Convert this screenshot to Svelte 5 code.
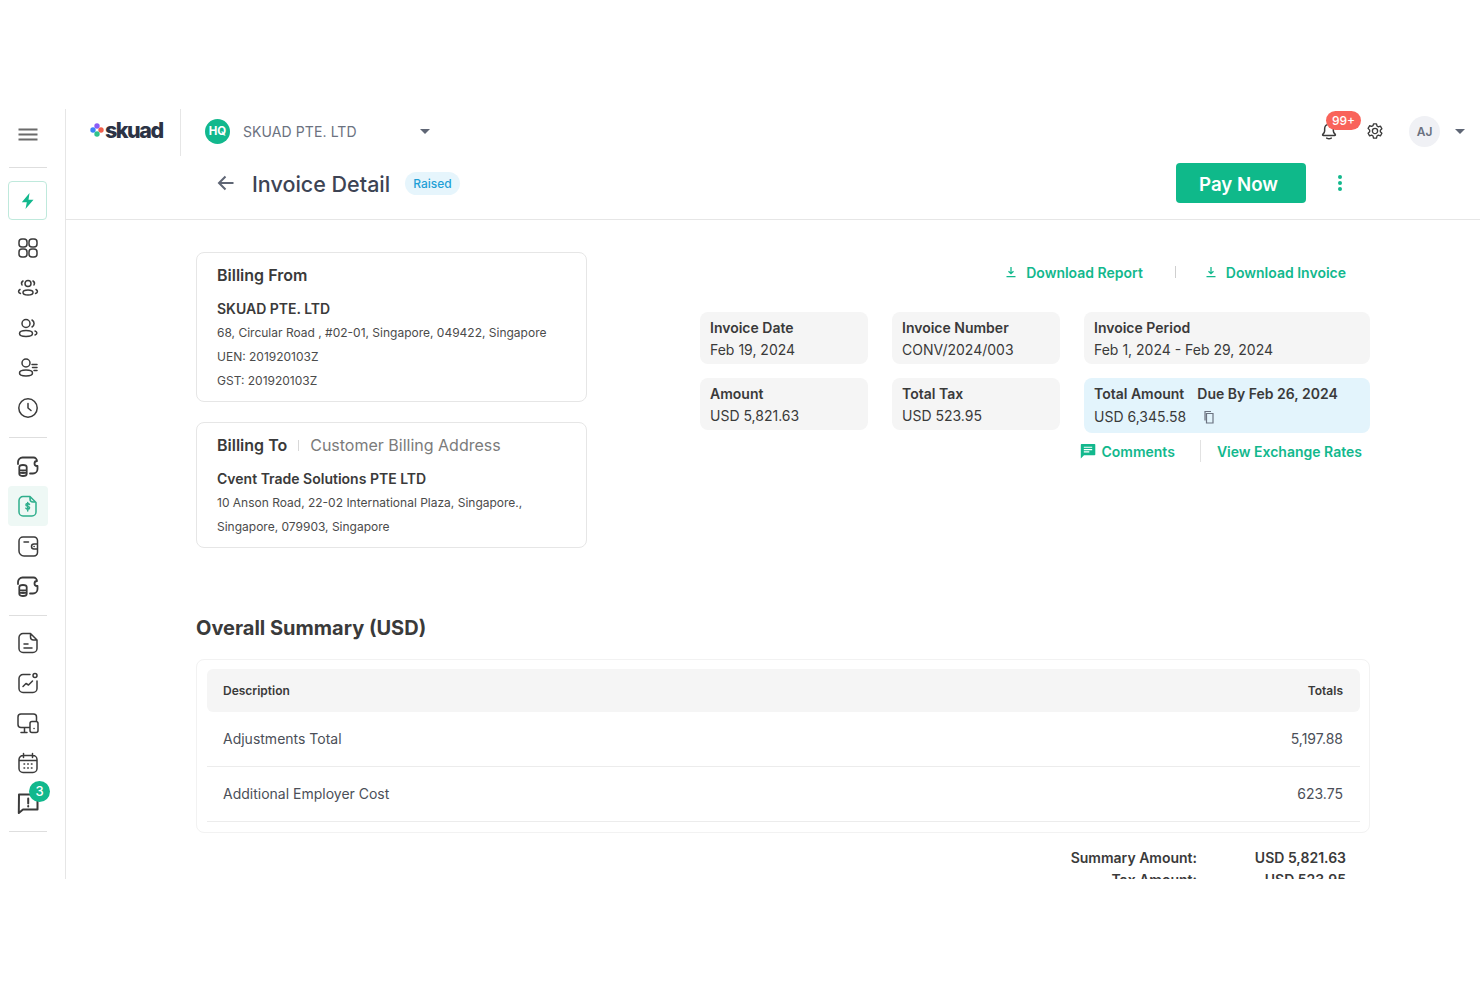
<script lang="ts">
  const rr = (x: number, y: number, w: number, h: number, r: number) =>
    `M${x + r} ${y}h${w - 2 * r}a${r} ${r} 0 0 1 ${r} ${r}v${h - 2 * r}a${r} ${r} 0 0 1-${r} ${r}h-${w - 2 * r}a${r} ${r} 0 0 1-${r}-${r}v-${h - 2 * r}a${r} ${r} 0 0 1 ${r}-${r}z`;

  const coins =
    'M2 10V8a4.500 4.500 0 0 1 4.500-4.500h11a3.500 3.500 0 0 1 3.500 3.500M21 12a2.500 2.500 0 1 1 0-5M21.500 12v3a4.500 4.500 0 0 1-4.500 4.500h-3M3.300 13c0-1.200 1.600-2 3.700-2s3.700.8 3.700 2v7c0 1.200-1.600 2-3.700 2s-3.700-.8-3.700-2zM3.300 15.500c0 1.300 7.400 1.300 7.400 0M3.300 18c0 1.300 7.400 1.300 7.400 0';

  const railGroups = [
    [
      { d: rr(3, 3, 8, 8, 3) + rr(13, 3, 8, 8, 3) + rr(3, 13, 8, 8, 3) + rr(13, 13, 8, 8, 3) },
      { d: 'M12 4.500a3 3 0 1 1 0 6 3 3 0 0 1 0-6zM7 5a3 3 0 0 0-1 4M17 5a3 3 0 0 1 1 4M12 14c-3 0-5 1-5 2.500s2 2.500 5 2.500 5-1 5-2.500-2-2.500-5-2.500zM4 13.500c-2 1.200-2 3 .5 4M20 13.500c2 1.200 2 3-.5 4' },
      { d: 'M10 3.500a4 4 0 1 1 0 8 4 4 0 0 1 0-8zM16 4a4 4 0 0 1 0 7M10 14.500c-4 0-6.500 1.200-6.500 3s2.500 3 6.500 3 6.500-1.200 6.500-3-2.500-3-6.500-3zM19 15c2.500 1 2.500 3 0 4' },
      { d: 'M10 3a4 4 0 1 1 0 8 4 4 0 0 1 0-8zM10 14c-4 0-6.500 1.200-6.500 3s2.500 3 6.500 3 6.500-1.200 6.500-3-2.500-3-6.500-3zM16 8.500h5M16.500 11.500h4.500M18 14.500h3' },
      { d: 'M12 2.800a9.200 9.200 0 1 1 0 18.400 9.200 9.200 0 0 1 0-18.400zM12 7.500V12l3 2.500' },
    ],
    [
      { d: coins, sw: 1.800 },
      { d: 'M7 2.500h7l6 6v9.500a4 4 0 0 1-4 4H7a4 4 0 0 1-4-4v-11.500a4 4 0 0 1 4-4zM14 3v2a3 3 0 0 0 3 3h2.500M13.500 10.500c-.3-.6-1-1-1.800-1-1 0-1.800.5-1.800 1.400 0 1.900 3.700 1 3.700 2.900 0 .9-.8 1.400-1.900 1.400-.8 0-1.500-.4-1.800-1M11.700 8.500v8.500', active: true },
      { d: 'M7 3h11a3.500 3.500 0 0 1 3.500 3.500v12a3.500 3.500 0 0 1-3.500 3.500H8a5 5 0 0 1-5-5V7a4 4 0 0 1 4-4zM8 8h4.500M21.500 10h-3.500a2.500 2.500 0 0 0 0 5h3.500M18 12.500h.2' },
      { d: coins, sw: 1.800 },
    ],
    [
      { d: 'M14.500 2.500H7a4 4 0 0 0-4 4v11a4 4 0 0 0 4 4h10a4 4 0 0 0 4-4V9zM14.500 3v3a3 3 0 0 0 3 3h3.500M8 13h4M8 17h8' },
      { d: 'M14 3.500H7A4 4 0 0 0 3 7.500v10a4 4 0 0 0 4 4h10a4 4 0 0 0 4-4V10M19 2.500a2 2 0 1 1 0 4 2 2 0 0 1 0-4zM7 15.500l3-3 2.500 1.500L16.500 10' },
      { d: 'M13 16.500H5a3 3 0 0 1-3-3V6a3 3 0 0 1 3-3h12.500a3 3 0 0 1 3 3v3.500M8.500 16.500v4.500M5 21.500h6' + rr(14, 10.500, 8, 11, 2) + 'M18 17.500h.1' },
      { d: rr(3, 4.500, 18, 17, 4) + 'M7.500 2.500v4M16.500 2.500v4M3 9.500h18M8 13h.6M11.700 13h.6M15.400 13h.6M8 17h.6M11.700 17h.6M15.400 17h.6' },
      { d: 'M3 3.500h18.500v15H7L2.800 22zM12.200 7.500v5M12.200 15v.4', badge: '3', sw: 2 },
    ],
  ];

  const facts = [
    { label: 'Invoice Date', value: 'Feb 19, 2024' },
    { label: 'Invoice Number', value: 'CONV/2024/003' },
    { label: 'Invoice Period', value: 'Feb 1, 2024 - Feb 29, 2024' },
    { label: 'Amount', value: 'USD 5,821.63' },
    { label: 'Total Tax', value: 'USD 523.95' },
  ];

  const rows = [
    { name: 'Adjustments Total', total: '5,197.88' },
    { name: 'Additional Employer Cost', total: '623.75' },
  ];
</script>

<div class="frame">
  <nav class="rail">
    <button class="rail-menu" aria-label="Menu">
      <svg width="24" height="24" viewBox="0 0 24 24"><path d="M2.500 6.500h19M2.500 11.500h19M2.500 16.500h19" stroke="#6b6b6b" stroke-width="2" /></svg>
    </button>
    <hr />
    <div class="bolt">
      <svg width="24" height="24" viewBox="0 0 24 24"><path d="M13.500 4 5.800 13.200h5l-1.300 6.800 8-9.200h-5z" fill="#12b88d" /></svg>
    </div>
    {#each railGroups as group, i}
      {#if i > 0}<hr />{/if}
      <div class="rail-group">
        {#each group as item}
          <div class="rail-item" class:active={item.active}>
            <svg width="24" height="24" viewBox="0 0 24 24" fill="none"><path d={item.d} stroke="currentColor" stroke-width={item.sw ?? 1.500} stroke-linecap="round" stroke-linejoin="round" /></svg>
            {#if item.badge}<span class="rail-badge">{item.badge}</span>{/if}
          </div>
        {/each}
      </div>
    {/each}
    <hr />
  </nav>

  <div class="main">
    <header class="topbar">
      <div class="logo">
        <svg width="14" height="14" viewBox="0 0 14 14">
          <circle cx="7" cy="3" r="2.700" fill="#8b5cf6" />
          <circle cx="3" cy="7" r="2.700" fill="#3b82f6" />
          <circle cx="11" cy="7" r="2.700" fill="#f2604c" />
          <circle cx="7" cy="11" r="2.700" fill="#2fc28c" />
        </svg>
        <span>skuad</span>
      </div>
      <div class="org">
        <span class="hq">HQ</span>
        <span class="org-name">SKUAD PTE. LTD</span>
        <span class="caret org-caret"></span>
      </div>
      <div class="top-actions">
        <div class="bell">
          <svg width="18" height="18" viewBox="0 0 24 24" fill="none"><path d="M12 3c-3.500 0-5.800 2.700-5.800 6v3c0 1.800-1.200 3.200-2.500 4.500-.5.600-.1 1.500.7 1.500h15.200c.8 0 1.200-.9.700-1.500-1.300-1.300-2.500-2.700-2.500-4.500V9c0-3.300-2.300-6-5.800-6zM9 21.500c1.800 1 4.200 1 6 0" stroke="#3b3b3b" stroke-width="2" stroke-linecap="round" /></svg>
          <span class="bell-badge">99+</span>
        </div>
        <svg class="gear" width="18" height="18" viewBox="0 0 24 24" fill="none"><path d="M12 8.500a3.500 3.500 0 1 1 0 7 3.500 3.500 0 0 1 0-7zM10 2.500h4l.6 2.800 1.900 1.100 2.700-.9 2 3.500-2.100 1.900v2.200l2.100 1.900-2 3.500-2.700-.9-1.900 1.100-.6 2.800h-4l-.6-2.800-1.900-1.100-2.700.9-2-3.500 2.100-1.900v-2.200L2.800 8.500l2-3.500 2.700.9 1.900-1.100z" stroke="#3b3b3b" stroke-width="1.800" stroke-linejoin="round" /></svg>
        <span class="avatar">AJ</span>
        <span class="caret"></span>
      </div>
    </header>

    <div class="titlebar">
      <svg class="back" width="18" height="18" viewBox="0 0 18 18" fill="none"><path d="M16.500 9H2M8.500 2.500 2 9l6.500 6.500" stroke="#5f6675" stroke-width="2" /></svg>
      <h1>Invoice Detail</h1>
      <span class="pill">Raised</span>
      <button class="pay">Pay Now</button>
      <svg class="kebab" width="24" height="24" viewBox="0 0 24 24"><circle cx="12" cy="6" r="2" fill="#12b88d" /><circle cx="12" cy="12" r="2" fill="#12b88d" /><circle cx="12" cy="18" r="2" fill="#12b88d" /></svg>
    </div>

    <div class="content">
      <div class="columns">
        <div class="billing">
          <section class="card">
            <h2>Billing From</h2>
            <h3>SKUAD PTE. LTD</h3>
            <p>68, Circular Road , #02-01, Singapore, 049422, Singapore</p>
            <p>UEN: 201920103Z</p>
            <p>GST: 201920103Z</p>
          </section>
          <section class="card">
            <h2>Billing To<i class="title-sep"></i><span class="sub">Customer Billing Address</span></h2>
            <h3>Cvent Trade Solutions PTE LTD</h3>
            <p>10 Anson Road, 22-02 International Plaza, Singapore.,</p>
            <p>Singapore, 079903, Singapore</p>
          </section>
        </div>

        <div class="details">
          <div class="downloads">
            <a class="link">
              <svg width="12" height="12" viewBox="0 0 12 12" fill="none"><path d="M6 1v6.500M3.500 5.200 6 7.700l2.500-2.500M1.500 10.700h9" stroke="#12b88d" stroke-width="1.300" /></svg>
              Download Report
            </a>
            <span class="dl-sep"></span>
            <a class="link">
              <svg width="12" height="12" viewBox="0 0 12 12" fill="none"><path d="M6 1v6.500M3.500 5.200 6 7.700l2.500-2.500M1.500 10.700h9" stroke="#12b88d" stroke-width="1.300" /></svg>
              Download Invoice
            </a>
          </div>
          <div class="facts">
            {#each facts as fact}
              <div class="fact">
                <strong>{fact.label}</strong>
                <span>{fact.value}</span>
              </div>
            {/each}
            <div class="fact total">
              <strong class="total-head"><span>Total Amount</span><span>Due By Feb 26, 2024</span></strong>
              <span class="total-value">
                USD 6,345.58
                <svg width="14" height="14" viewBox="0 0 14 14" fill="none"><path d="M4.500 3.500h6.500v9.500H4.500zM3 10.500V1.500h6" stroke="#6b7280" stroke-width="1.200" /></svg>
              </span>
            </div>
          </div>
          <div class="extras">
            <a class="link comments">
              <svg width="16" height="16" viewBox="0 0 16 16"><path d="M1.500 1h13a.8.8 0 0 1 .8.8v9.700a.8.800 0 0 1-.8.800H4L.8 15.500V1.800A.8.800 0 0 1 1.500 1z" fill="#12b88d" /><path d="M3.800 4.300h8.400M3.800 6.600h8.400M3.800 8.900h5.500" stroke="#fff" stroke-width="1.100" /></svg>
              Comments
            </a>
            <span class="extra-sep"></span>
            <a class="link">View Exchange Rates</a>
          </div>
        </div>
      </div>

      <h2 class="summary-title">Overall Summary (USD)</h2>
      <div class="table-card">
        <div class="table-head"><span>Description</span><span>Totals</span></div>
        {#each rows as row}
          <div class="table-row"><span>{row.name}</span><span>{row.total}</span></div>
        {/each}
      </div>
      <div class="totals">
        <span>Summary Amount:</span><span>USD 5,821.63</span>
        <span>Tax Amount:</span><span>USD 523.95</span>
      </div>
    </div>
  </div>
</div>

<style>
  :global(body) {
    margin: 0;
    background: #fff;
    font-family: Inter, "Noto Sans", sans-serif;
    color: #3a3a3a;
  }

  .frame {
    display: flex;
    margin-top: 109px;
    height: 770px;
    overflow: hidden;
  }

  .rail {
    flex: none;
    box-sizing: border-box;
    width: 66px;
    padding: 6px 8px 0;
    border-right: 1px solid #e6e6e6;
    color: #3b3b3b;
  }

  .rail hr {
    width: 38px;
    height: 1px;
    margin: 0 0 0 1px;
    border: 0;
    background: #dedede;
  }

  .rail-menu {
    display: flex;
    align-items: center;
    justify-content: center;
    width: 40px;
    height: 40px;
    margin-bottom: 12px;
    padding: 0;
    background: none;
    border: 0;
  }

  .bolt {
    display: flex;
    align-items: center;
    justify-content: center;
    box-sizing: border-box;
    width: 39px;
    height: 39px;
    margin: 13px 0 8px;
    border: 1px solid #bfe9dc;
    border-radius: 4px;
  }

  .rail-group {
    padding: 8px 0 9px;
  }

  .bolt + .rail-group {
    padding-top: 0;
  }

  .rail-group:last-of-type {
    padding: 7px 0 8px;
  }

  .rail-item {
    position: relative;
    display: flex;
    align-items: center;
    justify-content: center;
    width: 40px;
    height: 40px;
    border-radius: 4px;
  }

  .rail-item.active {
    background: #eef8f5;
    color: #2fae8c;
  }

  .rail-badge {
    position: absolute;
    top: -2px;
    left: 21px;
    width: 21px;
    height: 21px;
    border-radius: 50%;
    background: #12b88d;
    color: #fff;
    font-size: 13px;
    font-weight: 500;
    line-height: 21px;
    text-align: center;
  }

  .main {
    flex: 1;
    min-width: 0;
  }

  .topbar {
    display: flex;
    align-items: center;
    height: 47px;
    padding-left: 24px;
  }

  .logo {
    display: flex;
    align-items: center;
    gap: 1px;
    box-sizing: border-box;
    width: 91px;
    height: 100%;
    padding-bottom: 5px;
    border-right: 1px solid #e6e6e6;
    color: #2c3345;
    font-size: 21.500px;
    font-weight: 800;
    letter-spacing: -1.500px;
  }

  .org {
    display: flex;
    align-items: center;
    width: 226px;
    margin: 0 0 3px 24px;
  }

  .hq {
    flex: none;
    width: 25px;
    height: 25px;
    border-radius: 50%;
    background: #12b88d;
    color: #fff;
    font-size: 11.500px;
    font-weight: 700;
    line-height: 25px;
    text-align: center;
  }

  .org-name {
    margin-left: 13px;
    color: #6b7280;
    font-size: 14px;
    letter-spacing: 0.1px;
  }

  .caret {
    flex: none;
    width: 0;
    height: 0;
    border: 5px solid transparent;
    border-top: 5px solid #5f6675;
    border-bottom: 0;
  }

  .org-caret {
    margin-left: auto;
    margin-right: 1px;
  }

  .top-actions {
    display: flex;
    align-items: center;
    margin: 0 0 3px auto;
    padding-right: 15px;
  }

  .bell {
    position: relative;
    display: flex;
  }

  .bell-badge {
    position: absolute;
    top: -11px;
    left: 6px;
    width: 35px;
    height: 19px;
    border-radius: 10px;
    background: #f9635a;
    color: #fff;
    font-size: 12px;
    font-weight: 500;
    line-height: 19px;
    text-align: center;
  }

  .gear {
    margin: 0 25px 0 28px;
  }

  .avatar {
    width: 31px;
    height: 31px;
    margin-right: 15px;
    border-radius: 50%;
    background: #f0f1f5;
    color: #6b7280;
    font-size: 12px;
    font-weight: 600;
    line-height: 31px;
    text-align: center;
  }

  .titlebar {
    display: flex;
    align-items: center;
    height: 40px;
    padding: 7px 128px 16px 151px;
    border-bottom: 1px solid #e6e6e6;
  }

  h1 {
    margin: 1px 0 0 17px;
    color: #3d4454;
    font-size: 21.500px;
    font-weight: 500;
  }

  .pill {
    margin-left: 15px;
    padding: 0 8px;
    border-radius: 12px;
    background: #e6f5fc;
    color: #1f9fd6;
    font-size: 12px;
    font-weight: 500;
    line-height: 23px;
  }

  .pay {
    width: 130px;
    height: 40px;
    margin-left: auto;
    padding: 2px 5px 0 0;
    border: 0;
    border-radius: 4px;
    background: #0fb98a;
    color: #fff;
    font-family: inherit;
    font-size: 18.700px;
    font-weight: 600;
  }

  .kebab {
    margin-left: 22px;
  }

  .content {
    padding: 32px 110px 0 130px;
  }

  .columns {
    display: flex;
    justify-content: space-between;
  }

  .billing {
    display: flex;
    flex-direction: column;
    gap: 20px;
    width: 391px;
  }

  .card {
    padding: 10px 20px 8px;
    border: 1px solid #e6e6e6;
    border-radius: 8px;
  }

  .card h2 {
    display: flex;
    align-items: center;
    margin: 0 0 10px;
    font-size: 16px;
    font-weight: 600;
    line-height: 24px;
  }

  .title-sep {
    width: 1px;
    height: 11px;
    margin: 0 11px;
    background: #d8d8d8;
  }

  .sub {
    color: #7b7b7b;
    font-weight: 400;
  }

  .card h3 {
    margin: 0;
    font-size: 14px;
    font-weight: 600;
    line-height: 24px;
  }

  .card p {
    margin: 0;
    color: #4b4b4b;
    font-size: 12px;
    line-height: 24px;
  }

  .details {
    width: 670px;
  }

  .downloads {
    display: flex;
    align-items: center;
    justify-content: flex-end;
    height: 24px;
    margin-top: 8px;
    padding-right: 24px;
  }

  .link {
    display: flex;
    align-items: center;
    gap: 9px;
    color: #12b88d;
    font-size: 14px;
    font-weight: 600;
  }

  .dl-sep {
    width: 1px;
    height: 12px;
    margin: 0 29px 0 32px;
    background: #cfcfcf;
  }

  .facts {
    display: grid;
    grid-template-columns: 168px 168px 286px;
    gap: 14px 24px;
    align-items: start;
    margin-top: 28px;
  }

  .fact {
    display: flex;
    flex-direction: column;
    padding: 5px 10px 3px;
    border-radius: 8px;
    background: #f5f5f5;
    font-size: 14px;
    line-height: 22px;
  }

  .fact strong {
    font-weight: 600;
  }

  .fact.total {
    padding-bottom: 4px;
    background: #e3f4fc;
  }

  .total-head {
    display: flex;
    gap: 13px;
  }

  .total-value {
    display: flex;
    align-items: center;
    gap: 16px;
    line-height: 24px;
  }

  .extras {
    display: flex;
    align-items: center;
    justify-content: flex-end;
    height: 22px;
    margin-top: 7px;
    padding-right: 8px;
  }

  .comments {
    gap: 5px;
  }

  .extra-sep {
    width: 1px;
    height: 22px;
    margin: 0 16px 0 25px;
    background: #e2e2e2;
  }

  .summary-title {
    margin: 66px 0 17px;
    font-size: 20px;
    font-weight: 700;
    line-height: 28px;
  }

  .table-card {
    padding: 9px 9px 10px 10px;
    border: 1px solid #f2f2f2;
    border-radius: 8px;
  }

  .table-head,
  .table-row {
    display: flex;
    align-items: center;
    justify-content: space-between;
    padding: 0 17px 0 16px;
  }

  .table-head {
    height: 43px;
    border-radius: 6px;
    background: #f5f5f5;
    font-size: 12px;
    font-weight: 600;
  }

  .table-row {
    box-sizing: border-box;
    height: 55px;
    padding-bottom: 2px;
    border-bottom: 1px solid #ececec;
    color: #4b4f58;
    font-size: 14px;
  }

  .totals {
    display: grid;
    grid-template-columns: auto 149px;
    justify-content: end;
    margin-top: 14px;
    padding-right: 24px;
    font-size: 14px;
    font-weight: 600;
    line-height: 22px;
    text-align: right;
  }
</style>
